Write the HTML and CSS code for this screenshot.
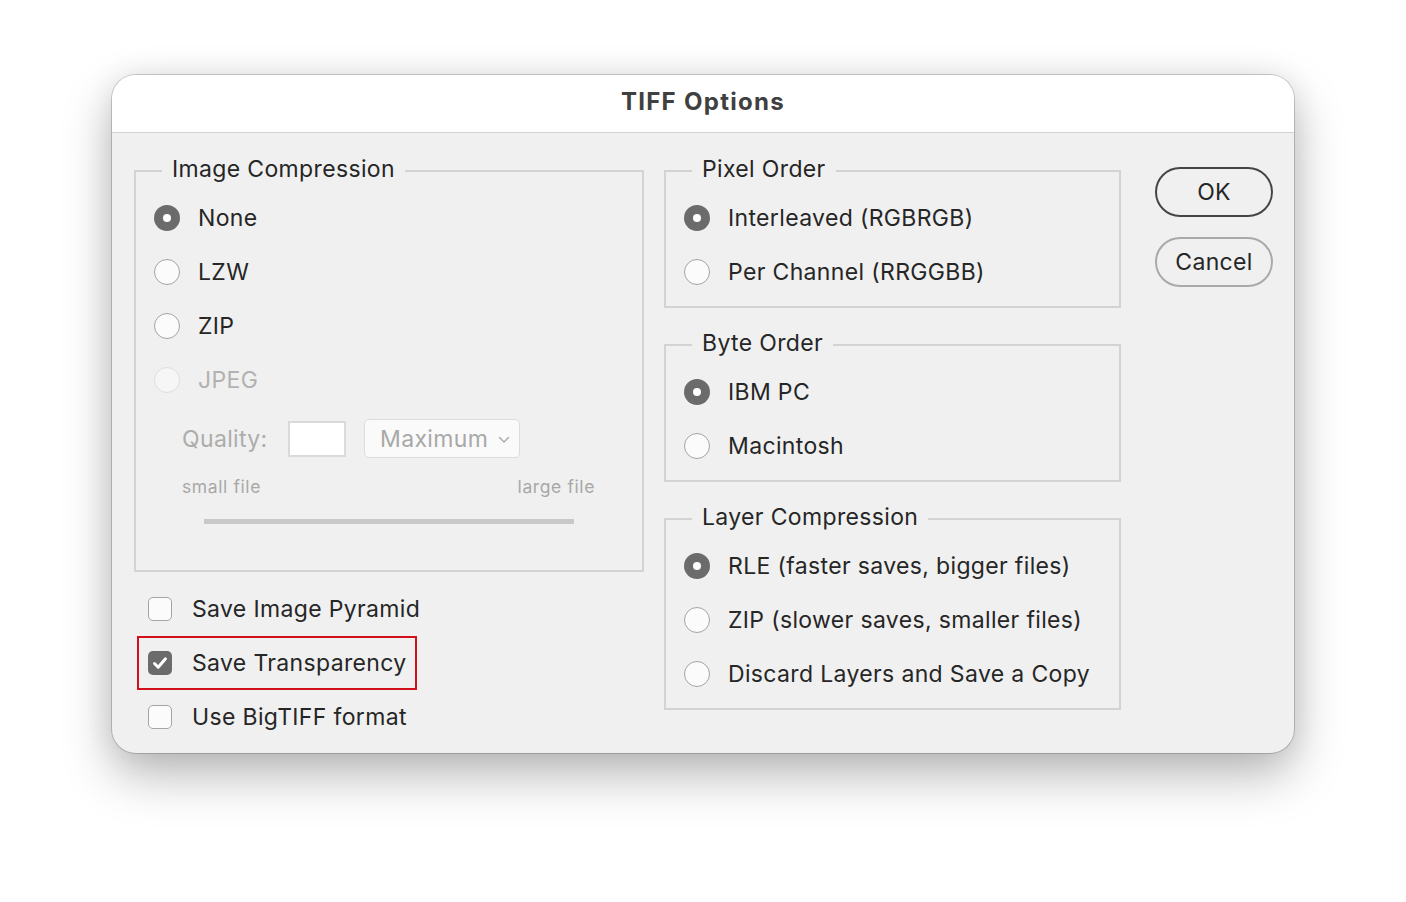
FILE: index.html
```html
<!DOCTYPE html>
<html>
<head>
<meta charset="utf-8">
<title>TIFF Options</title>
<link rel="stylesheet" href="styles.css">
</head>
<body>
<div class="window">
  <div class="titlebar">TIFF Options</div>
  <div class="content">
    <div class="col-left">
      <fieldset class="group group-main">
        <legend>Image Compression</legend>
        <div class="row"><span class="radio checked"></span><span class="label">None</span></div>
        <div class="row"><span class="radio"></span><span class="label">LZW</span></div>
        <div class="row"><span class="radio"></span><span class="label">ZIP</span></div>
        <div class="row disabled"><span class="radio"></span><span class="label">JPEG</span></div>
        <div class="quality">
          <span class="q-label">Quality:</span>
          <span class="q-input"></span>
          <span class="q-select">Maximum
            <svg class="chev" width="12" height="8" viewBox="0 0 12 8"><path d="M1.5 1.5 L6 6 L10.5 1.5" fill="none" stroke="#a8a8a8" stroke-width="1.4" stroke-linecap="round" stroke-linejoin="round"/></svg>
          </span>
        </div>
        <div class="scale-labels"><span>small file</span><span>large file</span></div>
        <div class="track"></div>
      </fieldset>
      <div class="checks">
        <div class="check-row"><span class="checkbox"></span><span class="label">Save Image Pyramid</span></div>
        <div class="check-row highlight"><span class="checkbox checked"><svg width="24" height="24" viewBox="0 0 24 24"><path d="M6.5 12.5 L10.2 16.2 L17.5 7.8" fill="none" stroke="#fff" stroke-width="3" stroke-linecap="round" stroke-linejoin="round"/></svg></span><span class="label">Save Transparency</span></div>
        <div class="check-row"><span class="checkbox"></span><span class="label">Use BigTIFF format</span></div>
      </div>
    </div>
    <div class="col-right">
      <fieldset class="group">
        <legend>Pixel Order</legend>
        <div class="row"><span class="radio checked"></span><span class="label">Interleaved (RGBRGB)</span></div>
        <div class="row"><span class="radio"></span><span class="label">Per Channel (RRGGBB)</span></div>
      </fieldset>
      <fieldset class="group">
        <legend>Byte Order</legend>
        <div class="row"><span class="radio checked"></span><span class="label">IBM PC</span></div>
        <div class="row"><span class="radio"></span><span class="label">Macintosh</span></div>
      </fieldset>
      <fieldset class="group">
        <legend>Layer Compression</legend>
        <div class="row"><span class="radio checked"></span><span class="label">RLE (faster saves, bigger files)</span></div>
        <div class="row"><span class="radio"></span><span class="label">ZIP (slower saves, smaller files)</span></div>
        <div class="row"><span class="radio"></span><span class="label">Discard Layers and Save a Copy</span></div>
      </fieldset>
    </div>
    <div class="col-buttons">
      <button class="btn btn-default">OK</button>
      <button class="btn">Cancel</button>
    </div>
  </div>
</div>
</body>
</html>
```

FILE: styles.css
```css
* { box-sizing: border-box; }
html, body { margin: 0; padding: 0; background: #ffffff; }
body {
  width: 1406px;
  height: 902px;
  padding: 75px 0 0 112px;
  font-family: Inter, "Noto Sans", "Liberation Sans", sans-serif;
  color: #262626;
  letter-spacing: 0.35px;
  overflow: hidden;
}
.window {
  width: 1182px;
  height: 678px;
  border-radius: 24px;
  background: #f0f0f0;
  box-shadow: 0 0 0 1px rgba(0,0,0,0.18), 0 22px 50px rgba(0,0,0,0.28), 0 0 30px rgba(0,0,0,0.08);
  overflow: hidden;
}
.titlebar {
  height: 58px;
  background: #ffffff;
  border-bottom: 1px solid #d2d2d2;
  text-align: center;
  font-weight: 700;
  font-size: 24px;
  letter-spacing: 1.3px;
  line-height: 53px;
  color: #404040;
}
.content {
  display: flex;
  padding: 24px 21px 0 22px;
}
.col-left { width: 510px; display: flex; flex-direction: column; }
.col-right { width: 457px; margin-left: 20px; display: flex; flex-direction: column; gap: 23px; }
.col-buttons { width: 118px; margin-left: 34px; padding-top: 10px; display: flex; flex-direction: column; gap: 20px; }

.group {
  margin: 0;
  border: 2px solid #d3d3d3;
  padding: 6px 0 7px 18px;
  min-width: 0;
}
.group legend {
  margin-left: 8px;
  padding: 0 10px 4px 10px;
  font-size: 23px;
  line-height: 24px;
  color: #262626;
}
.group-main { padding-bottom: 46px; }

.row {
  height: 54px;
  display: flex;
  align-items: center;
  gap: 18px;
  font-size: 23px;
}
.radio {
  width: 26px;
  height: 26px;
  border-radius: 50%;
  border: 1.5px solid #a4a4a4;
  background: #fbfbfb;
  flex: none;
  position: relative;
}
.radio.checked {
  border: none;
  background: #6b6b6b;
}
.radio.checked::after {
  content: "";
  position: absolute;
  left: 9px;
  top: 9px;
  width: 8px;
  height: 8px;
  border-radius: 50%;
  background: #ffffff;
}
.row.disabled .radio { border-color: #dedede; background: #f6f6f6; }
.row.disabled .label { color: #b2b2b2; }

.quality {
  margin-top: 12px;
  margin-left: 28px;
  display: flex;
  align-items: center;
  height: 39px;
}
.q-label { font-size: 23px; color: #acacac; width: 106px; }
.q-input {
  width: 58px;
  height: 36px;
  background: #ffffff;
  border: 2px solid #dadada;
}
.q-select {
  margin-left: 18px;
  width: 156px;
  height: 39px;
  border: 1px solid #dcdcdc;
  border-radius: 5px;
  background: #fafafa;
  display: flex;
  align-items: center;
  justify-content: space-between;
  padding: 0 9px 0 15px;
  font-size: 23px;
  color: #a8a8a8;
}
.chev { margin-top: 2px; }
.scale-labels {
  margin-top: 19px;
  margin-left: 28px;
  width: 413px;
  display: flex;
  justify-content: space-between;
  font-size: 17.5px;
  letter-spacing: 0.6px;
  line-height: 20px;
  color: #a8a8a8;
}
.track {
  margin-top: 22px;
  margin-left: 50px;
  width: 370px;
  height: 5px;
  background: #c9c9c9;
}

.checks { margin-top: 10px; display: flex; flex-direction: column; }
.check-row {
  margin-left: 3px;
  height: 54px;
  display: flex;
  align-items: center;
  gap: 20px;
  padding-left: 9px;
  padding-right: 8px;
  font-size: 23px;
  border: 2px solid transparent;
  align-self: flex-start;
}
.check-row.highlight { border-color: #d2101c; }
.checkbox {
  width: 24px;
  height: 24px;
  border-radius: 5px;
  border: 1.5px solid #a4a4a4;
  background: #fbfbfb;
  flex: none;
  display: flex;
}
.checkbox.checked { border: none; background: #6b6b6b; }
.checkbox svg { display: block; }

.btn {
  height: 50px;
  width: 118px;
  border-radius: 25px;
  border: 2px solid #a9a9a9;
  background: transparent;
  font-family: inherit;
  letter-spacing: 0.35px;
  font-size: 23px;
  color: #262626;
  padding: 0;
}
.btn-default { border-color: #454545; }
```
